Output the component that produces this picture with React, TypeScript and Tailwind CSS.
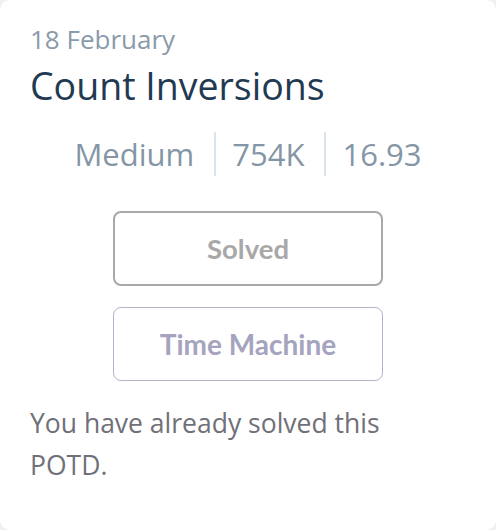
export default function App() {
  const stats = ['Medium', '754K', '16.93'];

  return (
    <div className="w-[496px] h-[530px] bg-[#eef0f2]">
      <div className="w-full h-full bg-white rounded-[10px] px-[30px] pt-[23px] font-['Open_Sans',sans-serif]">
        <div className="text-[26px] leading-[32px] text-[#8a9aab]">18 February</div>
        <h1 className="mt-[9px] text-[37.5px] leading-[44px] text-[#1f3a52]">Count Inversions</h1>

        {/* difficulty / submissions / accuracy */}
        <div className="mt-[24px] flex justify-center items-stretch text-[31px] leading-[44px] text-[#8496a6]">
          {stats.map((s, i) => (
            <div
              key={s}
              className={
                i === 0
                  ? 'pr-[20px]'
                  : 'pl-[16px] pr-[20px] border-l-2 border-[#dbe4ec] last:pr-0'
              }
            >
              {s}
            </div>
          ))}
        </div>

        <div className="mt-[35px] flex flex-col items-center gap-[21px] font-['Lato',sans-serif] font-bold">
          <button className="w-[270px] h-[75px] rounded-[8px] border-2 border-[#a8a8a8] text-[27.5px] text-[#a8a8a8]">
            Solved
          </button>
          <button className="w-[270px] h-[74px] rounded-[8px] border border-[#b3b3c9] text-[28px] text-[#a4a4be]">
            Time Machine
          </button>
        </div>

        <p className="mt-[21px] w-[400px] text-[26.5px] leading-[42px] text-[#707078]">
          You have already solved this POTD.
        </p>
      </div>
    </div>
  );
}
